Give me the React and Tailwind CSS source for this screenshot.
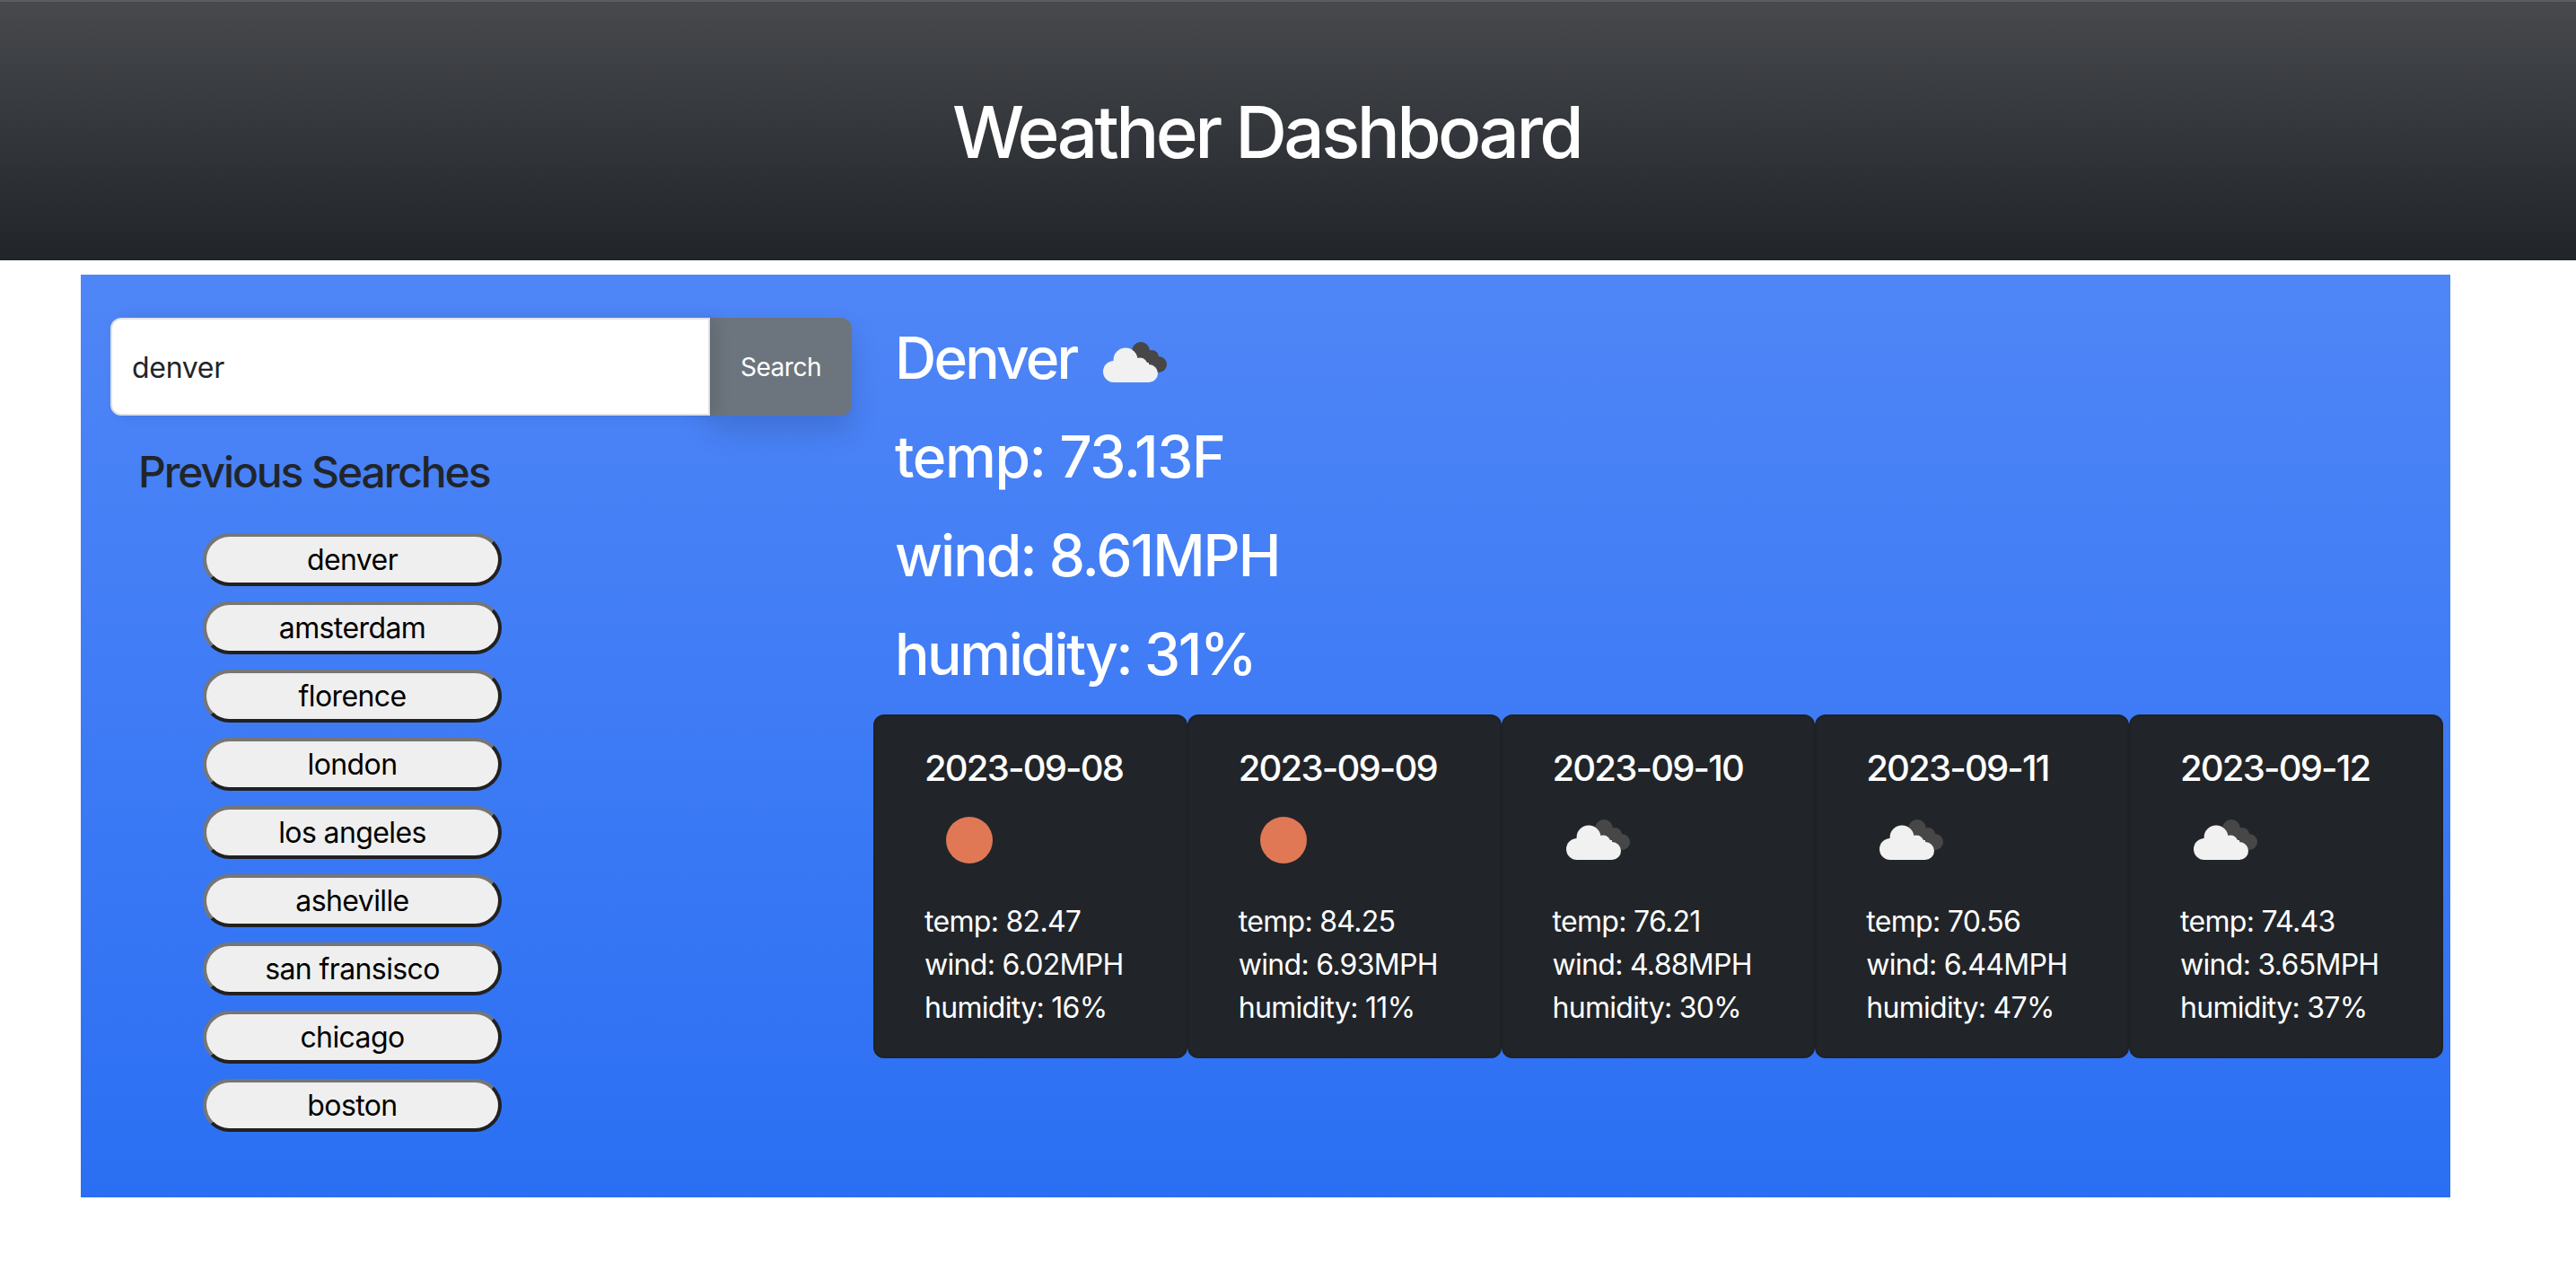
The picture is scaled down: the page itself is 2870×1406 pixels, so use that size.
const history = ["denver", "amsterdam", "florence", "london", "los angeles", "asheville", "san fransisco", "chicago", "boston"];

const forecast = [
  { date: "2023-09-08", icon: "sun", temp: "82.47", wind: "6.02", humidity: "16" },
  { date: "2023-09-09", icon: "sun", temp: "84.25", wind: "6.93", humidity: "11" },
  { date: "2023-09-10", icon: "cloud", temp: "76.21", wind: "4.88", humidity: "30" },
  { date: "2023-09-11", icon: "cloud", temp: "70.56", wind: "6.44", humidity: "47" },
  { date: "2023-09-12", icon: "cloud", temp: "74.43", wind: "3.65", humidity: "37" },
];

function CloudIcon() {
  return (
    <svg viewBox="0 0 100 100" className="w-[100px] h-[100px] shrink-0 blur-[0.6px]">
      <g fill="#474747">
        <circle cx="57" cy="37" r="10" />
        <circle cx="69" cy="44" r="8" />
        <circle cx="77" cy="52" r="9" />
        <rect x="55" y="40" width="20" height="20" />
      </g>
      <g fill="#f1f1f1">
        <circle cx="40" cy="47" r="13.5" />
        <circle cx="56" cy="53" r="8.5" />
        <circle cx="27" cy="60" r="12" />
        <circle cx="66" cy="62" r="10" />
        <rect x="27" y="50" width="39" height="22" />
      </g>
    </svg>
  );
}

function SunIcon() {
  return (
    <svg viewBox="0 0 100 100" className="w-[100px] h-[100px] shrink-0 blur-[0.6px]">
      <circle cx="50" cy="50" r="26" fill="#e07856" />
    </svg>
  );
}

function ForecastCard({ day }) {
  return (
    <div className="w-[349.75px] h-[383px] shrink-0 bg-[#212529] border-2 border-[#1e2226] rounded-xl pl-[55px] pt-[34px] text-white text-[32px] leading-[48px] tracking-[-0.7px]">
      <h5 className="text-[40px] leading-[48px] font-medium tracking-[-1.8px]">{day.date}</h5>
      <div className="mt-[6px] mb-[17px]">
        {day.icon === "sun" ? <SunIcon /> : <CloudIcon />}
      </div>
      <p>temp: {day.temp}</p>
      <p>wind: {day.wind}MPH</p>
      <p>humidity: {day.humidity}%</p>
    </div>
  );
}

export default function App() {
  return (
    <div className="min-h-screen bg-white font-['Inter',sans-serif]">
      <header className="h-[290px] border-t-2 border-[#5b5d61] bg-linear-to-b from-[#47494d] to-[#212529] flex items-center justify-center pr-[48px] pt-[2px]">
        <h1 className="text-[80px] font-medium text-white tracking-[-3.6px]">Weather Dashboard</h1>
      </header>

      <main className="ml-[90px] mr-[140px] mt-[16px] h-[1028px] bg-linear-to-b from-[#4f86f7] to-[#2a6ff3] flex">
        <section className="w-[883px] shrink-0 pl-[33px] pt-[48px]">
          <div className="flex w-[826px] h-[109px]">
            <input
              readOnly
              value="denver"
              className="flex-1 min-w-0 bg-white rounded-l-xl border-2 border-[#dee2e6] pl-[22px] pt-[2px] text-[32px] tracking-[-0.3px] text-[#212529] outline-none shadow-[8px_0_16px_rgba(0,0,0,0.1)] relative z-10"
            />
            <button className="w-[158px] bg-[#6c757d] rounded-r-xl text-white text-[28px] tracking-[-0.5px] shadow-[0_16px_32px_rgba(0,0,0,0.15)]">
              Search
            </button>
          </div>
          <h4 className="mt-[34px] ml-[31px] text-[48px] leading-[58px] font-medium text-[#212529] tracking-[-2.1px]">Previous Searches</h4>
          <ul className="mt-[39px] ml-[103px] w-[333px] flex flex-col gap-[17px]">
            {history.map((city) => (
              <li key={city}>
                <button className="w-full h-[59px] pt-[1px] rounded-full bg-[#efefef] border-4 border-t-[#767676] border-l-[#767676] border-r-[#212121] border-b-[#212121] text-black text-[32px] leading-none tracking-[-0.6px]">
                  {city}
                </button>
              </li>
            ))}
          </ul>
        </section>

        <section className="flex-1 min-w-0 pt-[54px]">
          <div className="pl-[24px] text-white text-[64px] leading-[77px] font-medium flex flex-col gap-[33px]">
            <div className="flex items-center gap-[15px] h-[77px]">
              <h2 className="tracking-[-2.8px]">Denver</h2>
              <div className="pt-[10px]">
                <CloudIcon />
              </div>
            </div>
            <h2 className="tracking-[-1.4px]">temp: 73.13F</h2>
            <h2 className="tracking-[-2px]">wind: 8.61MPH</h2>
            <h2 className="tracking-[-2.4px]">humidity: 31%</h2>
          </div>
          <div className="flex mt-[29px]">
            {forecast.map((day) => (
              <ForecastCard key={day.date} day={day} />
            ))}
          </div>
        </section>
      </main>
    </div>
  );
}
